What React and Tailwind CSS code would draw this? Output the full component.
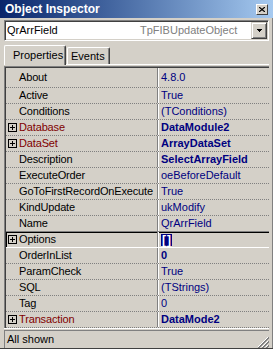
import React from 'react';

const rows = [
  { name: 'About', value: '4.8.0', first: true },
  { name: 'Active', value: 'True' },
  { name: 'Conditions', value: '(TConditions)' },
  { name: 'Database', value: 'DataModule2', plus: true, red: true, bold: true },
  { name: 'DataSet', value: 'ArrayDataSet', plus: true, red: true, bold: true },
  { name: 'Description', value: 'SelectArrayField', bold: true },
  { name: 'ExecuteOrder', value: 'oeBeforeDefault' },
  { name: 'GoToFirstRecordOnExecute', value: 'True' },
  { name: 'KindUpdate', value: 'ukModify' },
  { name: 'Name', value: 'QrArrField', beforeSelected: true },
  { name: 'Options', value: '[]', plus: true, selected: true },
  { name: 'OrderInList', value: '0', bold: true },
  { name: 'ParamCheck', value: 'True' },
  { name: 'SQL', value: '(TStrings)' },
  { name: 'Tag', value: '0' },
  { name: 'Transaction', value: 'DataMode2', plus: true, red: true, bold: true },
];

function PlusBox() {
  return (
    <svg width="9" height="9" viewBox="0 0 9 9" className="shrink-0">
      <rect x="0.5" y="0.5" width="8" height="8" fill="none" stroke="#000" />
      <path d="M2 4.5h5M4.5 2v5" stroke="#000" />
    </svg>
  );
}

function Row({ r }) {
  let rowCls = 'border-b border-dotted border-b-[#808080]';
  if (r.beforeSelected) rowCls = 'border-b border-b-[#808080]';
  if (r.selected) rowCls = 'border-b border-b-white shadow-[inset_1px_1px_0_#000]';

  return (
    <div className={`flex ${r.first ? 'h-[20px]' : 'h-[16px]'} ${rowCls}`}>
      <div className="w-[152px] flex items-center pl-[2px] border-r border-r-[#808080] overflow-hidden whitespace-nowrap">
        <span className="w-[11px] flex shrink-0">{r.plus && <PlusBox />}</span>
        <span className={`tracking-[-0.15px] ${r.red ? 'text-[#800000]' : 'text-black'}`}>{r.name}</span>
      </div>
      <div className="flex-1 flex items-center pl-[2px] border-l border-l-white whitespace-nowrap">
        {r.selected ? (
          <span className="bg-[#000080] text-white font-bold text-[12px] leading-[12px] h-[12px] flex items-center gap-[1px] px-[1px]">
            <span>[</span>
            <span>]</span>
          </span>
        ) : (
          <span className={`text-[#000080] ${r.bold ? 'font-bold' : ''}`}>{r.value}</span>
        )}
      </div>
    </div>
  );
}

export default function App() {
  return (
    <div className="w-[273px] h-[349px] bg-[#d4d0c8] flex flex-col overflow-hidden font-['Liberation_Sans',Arial,sans-serif] text-[11px] leading-none text-black">
      {/* Title bar */}
      <div className="h-[18px] shrink-0 flex items-center justify-between pl-[5px] pr-[5px] bg-gradient-to-r from-[#0a246a] to-[#a6caf0]">
        <span className="text-white font-bold text-[12px]">Object Inspector</span>
        <div className="w-[12px] h-[11px] bg-[#d4d0c8] border border-t-white border-l-white border-b-[#404040] border-r-[#404040] flex items-center justify-center">
          <svg width="6" height="5" viewBox="0 0 6 5">
            <path d="M0 0l6 5M6 0l-6 5" stroke="#000" strokeWidth="1.2" />
          </svg>
        </div>
      </div>

      <div className="flex-1 flex flex-col pl-[4px] pr-[3px] border-r border-r-[#808080]">
        {/* Combo */}
        <div className="mt-[2px] h-[21px] shrink-0 flex bg-white border border-t-[#808080] border-l-[#808080] border-b-white border-r-white shadow-[inset_1px_1px_0_#404040,inset_-1px_-1px_0_#d4d0c8] p-[1px]">
          <div className="flex-1 flex items-center pl-[1px] whitespace-nowrap">
            <span className="w-[133px]">QrArrField</span>
            <span className="text-[#808080]">TpFIBUpdateObject</span>
          </div>
          <div className="w-[16px] h-[17px] bg-[#d4d0c8] border border-t-[#d4d0c8] border-l-[#d4d0c8] border-b-[#404040] border-r-[#404040] shadow-[inset_1px_1px_0_#fff,inset_-1px_-1px_0_#808080] flex items-center justify-center">
            <svg width="5" height="3" viewBox="0 0 5 3">
              <path d="M0 0h5v1h-1v1h-1v1h-1v-1h-1v-1h-1z" fill="#000" />
            </svg>
          </div>
        </div>

        {/* Tabs */}
        <div className="mt-[2px] h-[21px] shrink-0 flex items-end">
          <div className="relative z-10 -mb-[1px] w-[62px] h-[20px] bg-[#d4d0c8] border-t border-l border-t-white border-l-white border-r border-r-[#404040] shadow-[inset_-1px_0_0_#808080] rounded-t-[2px] flex items-center pl-[8px] pb-[1px]">
            Properties
          </div>
          <div className="ml-[1px] w-[43px] h-[17px] bg-[#d4d0c8] border-t border-l border-t-white border-l-white border-r border-r-[#404040] shadow-[inset_-1px_0_0_#808080] rounded-t-[2px] flex items-center pl-[3px]">
            Events
          </div>
        </div>

        {/* Sheet */}
        <div className="flex-1 flex flex-col border-t border-t-white">
          <div className="mt-[1px] flex flex-col border-t border-l border-t-[#808080] border-l-[#808080] shadow-[inset_1px_1px_0_#404040] pl-[1px] pt-[1px]">
            {rows.map((r) => (
              <Row key={r.name} r={r} />
            ))}
          </div>
          <div className="h-[1px] bg-white" />
        </div>

        {/* Status bar */}
        <div className="mt-[1px] h-[18px] shrink-0 flex items-center justify-between border-t border-l border-t-[#808080] border-l-[#808080] pl-[2px]">
          <span>All shown</span>
          <svg width="12" height="12" viewBox="0 0 12 12" className="self-end">
            <path d="M11 1L1 11M11 5L5 11M11 9L9 11" stroke="#fff" />
            <path d="M12 1L1 12M12 2L2 12M12 5L5 12M12 6L6 12M12 9L9 12M12 10L10 12" stroke="#808080" />
          </svg>
        </div>
      </div>
      <div className="h-[2px] shrink-0 bg-[#404040]" />
    </div>
  );
}
